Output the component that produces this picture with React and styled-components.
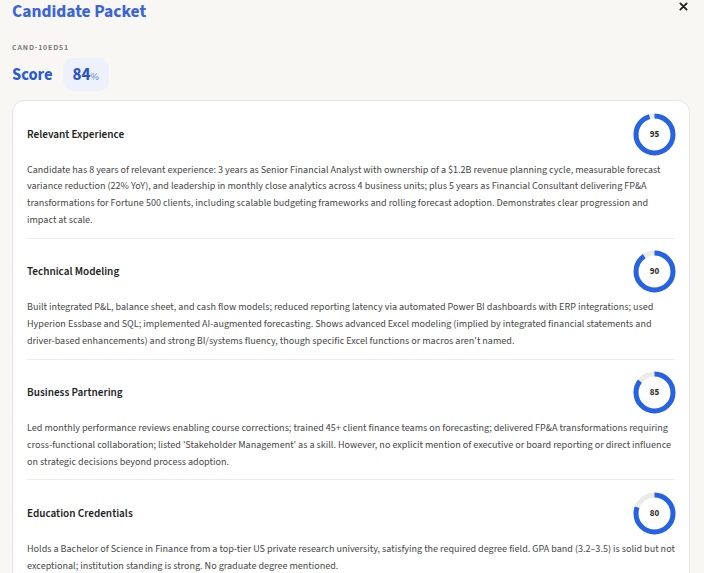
import React from "react";
import styled, { createGlobalStyle } from "styled-components";

const Global = createGlobalStyle`
  html, body { margin: 0; padding: 0; background: #f8f7f3; }
  body { font-family: "Source Sans 3", Lato, "Noto Sans", sans-serif; color: #2b2b2b; overflow: hidden; }
  * { box-sizing: border-box; }
`;

const Page = styled.div`
  width: 704px;
  height: 573px;
  padding: 0 14px 0 12px;
  position: relative;
  background: #f8f7f3;
`;

const Title = styled.h1`
  margin: 0;
  font-size: 17.5px;
  line-height: 23px;
  font-weight: 700;
  color: #3a64d8;
`;

const Close = styled.button`
  position: absolute;
  top: 0;
  right: 14px;
  width: 14px;
  height: 13px;
  padding: 0;
  border: 0;
  background: transparent;
  display: flex;
  align-items: center;
  justify-content: center;
  cursor: pointer;
`;

const Code = styled.div`
  margin-top: 20px;
  font-size: 8px;
  line-height: 10px;
  letter-spacing: 0.85px;
  font-weight: 600;
  color: #707070;
`;

const ScoreRow = styled.div`
  margin-top: 5px;
  display: flex;
  align-items: center;
  gap: 10px;
`;

const ScoreLabel = styled.span`
  font-size: 16.5px;
  font-weight: 700;
  color: #2d5bd4;
`;

const Pill = styled.span`
  display: inline-flex;
  align-items: baseline;
  height: 33px;
  padding: 6px 10px 0 10px;
  border-radius: 10px;
  background: #edf1fb;
  color: #2c52c4;
  font-size: 17px;
  font-weight: 700;
  line-height: 22px;
`;

const Pct = styled.span`
  font-size: 10px;
  font-weight: 600;
  color: #7c95d9;
`;

const Card = styled.div`
  margin-top: 9px;
  background: #ffffff;
  border: 1px solid #e9e6df;
  border-radius: 12px;
  padding: 0 14px 0 14px;
`;

const Section = styled.section`
  padding: 12px 0 9px;
  border-top: ${(p) => (p.$first ? "none" : "1px solid #ecebe7")};
`;

const Head = styled.div`
  display: flex;
  align-items: center;
  justify-content: space-between;
  height: 42px;
`;

const SectionTitle = styled.h2`
  margin: 0;
  font-size: 11.2px;
  font-weight: 600;
  color: #232323;
`;

const Body = styled.p`
  margin: 6.5px 0 0;
  font-size: 10.1px;
  line-height: 16.8px;
  color: #474747;
`;

const RingWrap = styled.div`
  position: relative;
  width: 43px;
  height: 43px;
  margin-right: -1px;
`;

const RingLabel = styled.span`
  position: absolute;
  inset: 0;
  display: flex;
  align-items: center;
  justify-content: center;
  font-size: 9px;
  font-weight: 700;
  color: #2b2b2b;
`;

function Ring({ value }) {
  const r = 18.5;
  const c = 2 * Math.PI * r;
  return (
    <RingWrap>
      <svg width="43" height="43" viewBox="0 0 43 43">
        <circle cx="21.5" cy="21.5" r={r} fill="none" stroke="#ebebe8" strokeWidth="5" />
        <circle
          cx="21.5"
          cy="21.5"
          r={r}
          fill="none"
          stroke="#2563e4"
          strokeWidth="5"
          strokeDasharray={`${(c * value) / 100} ${c}`}
          transform="rotate(-90 21.5 21.5)"
        />
      </svg>
      <RingLabel>{value}</RingLabel>
    </RingWrap>
  );
}

const items = [
  {
    title: "Relevant Experience",
    score: 95,
    text: "Candidate has 8 years of relevant experience: 3 years as Senior Financial Analyst with ownership of a $1.2B revenue planning cycle, measurable forecast variance reduction (22% YoY), and leadership in monthly close analytics across 4 business units; plus 5 years as Financial Consultant delivering FP&A transformations for Fortune 500 clients, including scalable budgeting frameworks and rolling forecast adoption. Demonstrates clear progression and impact at scale.",
  },
  {
    title: "Technical Modeling",
    score: 90,
    text: "Built integrated P&L, balance sheet, and cash flow models; reduced reporting latency via automated Power BI dashboards with ERP integrations; used Hyperion Essbase and SQL; implemented AI-augmented forecasting. Shows advanced Excel modeling (implied by integrated financial statements and driver-based enhancements) and strong BI/systems fluency, though specific Excel functions or macros aren't named.",
  },
  {
    title: "Business Partnering",
    score: 85,
    text: "Led monthly performance reviews enabling course corrections; trained 45+ client finance teams on forecasting; delivered FP&A transformations requiring cross-functional collaboration; listed 'Stakeholder Management' as a skill. However, no explicit mention of executive or board reporting or direct influence on strategic decisions beyond process adoption.",
  },
  {
    title: "Education Credentials",
    score: 80,
    text: "Holds a Bachelor of Science in Finance from a top-tier US private research university, satisfying the required degree field. GPA band (3.2–3.5) is solid but not exceptional; institution standing is strong. No graduate degree mentioned.",
  },
];

export default function App() {
  return (
    <>
      <Global />
      <Page>
        <Title>Candidate Packet</Title>
        <Close aria-label="Close">
          <svg width="9" height="9" viewBox="0 0 10 10">
            <path d="M1.5 1.5 L8.5 8.5 M8.5 1.5 L1.5 8.5" stroke="#1f1f1f" strokeWidth="2" strokeLinecap="round" />
          </svg>
        </Close>
        <Code>CAND-10ED51</Code>
        <ScoreRow>
          <ScoreLabel>Score</ScoreLabel>
          <Pill>
            84<Pct>%</Pct>
          </Pill>
        </ScoreRow>
        <Card>
          {items.map((it, i) => (
            <Section key={it.title} $first={i === 0}>
              <Head>
                <SectionTitle>{it.title}</SectionTitle>
                <Ring value={it.score} />
              </Head>
              <Body>{it.text}</Body>
            </Section>
          ))}
        </Card>
      </Page>
    </>
  );
}
